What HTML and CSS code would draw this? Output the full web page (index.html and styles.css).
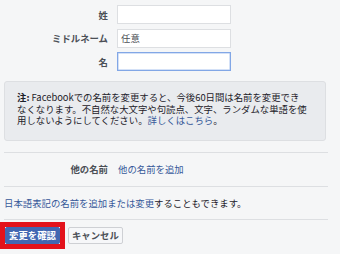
FILE: index.html
```html
<!DOCTYPE html>
<html lang="ja">
<head>
<meta charset="utf-8">
<link rel="stylesheet" href="styles.css">
</head>
<body>
<div class="page">
  <div class="fields">
    <label class="lbl">姓</label>
    <input class="inp" type="text" value="">
    <label class="lbl">ミドルネーム</label>
    <input class="inp" type="text" value="任意">
    <label class="lbl">名</label>
    <input class="inp focus" type="text" value="">
  </div>
  <div class="note"><b>注:</b> Facebookでの名前を変更すると、今後60日間は名前を変更でき<br>なくなります。不自然な大文字や句読点、文字、ランダムな単語を使<br>用しないようにしてください。<a class="link" href="#">詳しくはこちら</a>。</div>
  <div class="other">
    <span class="lbl">他の名前</span>
    <a class="link" href="#">他の名前を追加</a>
  </div>
  <div class="jp"><a class="link" href="#">日本語表記の名前を追加または変更</a>することもできます。</div>
  <div class="actions">
    <div class="hilite"><button class="btn primary">変更を確認</button></div>
    <button class="btn">キャンセル</button>
  </div>
</div>
</body>
</html>
```

FILE: styles.css
```css
html, body {
  margin: 0;
  background: #f5f6f7;
}
body {
  font-family: "Noto Sans CJK JP", sans-serif;
  font-size: 9.4px;
  color: #1d2129;
}
.page {
  width: 324px;
  padding: 5px 0 0 4px;
}
.fields {
  display: grid;
  grid-template-columns: 104px 114px;
  column-gap: 9px;
  row-gap: 4.5px;
  align-items: center;
}
.lbl {
  text-align: right;
  font-weight: bold;
  color: #4b4f56;
}
.inp {
  box-sizing: border-box;
  height: 19px;
  width: 114px;
  margin: 0;
  border: 1px solid #dddfe2;
  background: #fff;
  padding: 0 3px;
  font-family: inherit;
  font-size: 9.4px;
  color: #4b4f56;
  outline: none;
}
.inp.focus {
  border-color: #82a7e6;
  box-shadow: inset 0 0 0 0.5px #a9c3ef;
}
.note {
  margin-top: 10px;
  width: 322px;
  box-sizing: border-box;
  background: #e9ebee;
  border: 1px solid #dddfe2;
  border-radius: 3px;
  padding: 10px 6px 13px 12px;
  line-height: 11.6px;
  color: #1d2129;
  white-space: nowrap;
}
.link {
  color: #365899;
  text-decoration: none;
}
.other {
  margin-top: 11px;
  border-top: 1px solid #dddfe2;
  border-bottom: 1px solid #dddfe2;
  height: 33px;
  display: grid;
  grid-template-columns: 104px auto;
  column-gap: 10px;
  align-items: center;
}
.jp {
  height: 32px;
  line-height: 32px;
  border-bottom: 1px solid #dddfe2;
}
.actions {
  display: flex;
  align-items: center;
  gap: 3px;
  margin-top: 2px;
  margin-left: -4px;
}
.hilite {
  border: 5px solid #e3121b;
  display: flex;
}
.btn {
  box-sizing: border-box;
  height: 17px;
  margin: 0;
  padding: 0 3px;
  border: 1px solid #ced0d4;
  border-radius: 2px;
  background: #f6f7f9;
  font-family: inherit;
  font-size: 9.4px;
  font-weight: bold;
  color: #4b4f56;
  line-height: 15px;
  white-space: nowrap;
}
.btn.primary {
  background: #4267b2;
  border-color: #4267b2;
  color: #fff;
}
```
